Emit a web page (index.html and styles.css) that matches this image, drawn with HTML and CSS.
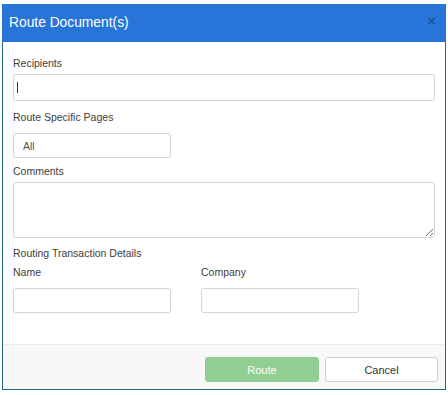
FILE: index.html
```html
<!DOCTYPE html>
<html>
<head>
    <title>Route Document(s)</title>
    <link rel="stylesheet" href="styles.css">
</head>
<body>
    <div class="dialog">
        <div class="dialog-header">
            <span class="dialog-title">Route Document(s)</span>
            <span class="close">&times;</span>
        </div>

        <div class="dialog-body">
            <label class="label">Recipients</label>
            <div class="input-wrap">
                <input type="text" class="input input-lg">
                <span class="caret"></span>
            </div>

            <label class="label label-sm">Route Specific Pages</label>
            <input type="text" class="input input-sm pages" value="All">

            <label class="label">Comments</label>
            <textarea class="input comments"></textarea>

            <div class="section-title">Routing Transaction Details</div>
            <div class="details">
                <div class="detail">
                    <label class="label label-sm">Name</label>
                    <input type="text" class="input input-sm">
                </div>
                <div class="detail">
                    <label class="label label-sm">Company</label>
                    <input type="text" class="input input-sm">
                </div>
            </div>
        </div>

        <div class="dialog-footer">
            <button class="btn btn-route">Route</button>
            <button class="btn btn-cancel">Cancel</button>
        </div>
    </div>
</body>
</html>
```

FILE: styles.css
```css
* {
    box-sizing: border-box;
}

body {
    margin: 0;
    background-color: #fff;
    font-family: "Liberation Sans", Arial, sans-serif;
    color: #444;
}

.dialog {
    width: 444px;
    margin: 4px 2px 0 2px;
    border: 1px solid #1d6a89;
    border-top: none;
    background-color: #fff;
}

.dialog-header {
    display: flex;
    align-items: center;
    justify-content: space-between;
    height: 38px;
    margin: 0 -1px;
    padding: 0 10px 0 7px;
    background-color: #2775d8;
}

.dialog-title {
    color: #fff;
    font-size: 13.8px;
    padding-bottom: 2px;
}

.close {
    color: rgba(0, 0, 0, 0.28);
    font-size: 15px;
    font-weight: bold;
    line-height: 1;
    padding-bottom: 6px;
}

.dialog-body {
    display: flex;
    flex-direction: column;
    align-items: flex-start;
    padding: 14px 10px 31px 10px;
}

.label,
.section-title {
    display: block;
    font-size: 10.5px;
    line-height: 14px;
    color: #3d3d3d;
    margin-bottom: 4px;
}

.label-sm {
    margin-bottom: 9px;
}

.section-title {
    margin-bottom: 5px;
}

.input {
    display: block;
    border: 1px solid #d4d4d4;
    border-radius: 3px;
    background-color: #fff;
    font-family: inherit;
    font-size: 10.5px;
    color: #555;
    padding: 0 9px;
    outline: none;
}

.input-wrap {
    position: relative;
    width: 100%;
    margin-bottom: 9px;
}

.input-lg {
    width: 100%;
    height: 27px;
}

.caret {
    position: absolute;
    left: 4px;
    top: 8px;
    width: 1px;
    height: 11px;
    background-color: #333;
}

.input-sm {
    width: 158px;
    height: 25px;
}

.pages {
    margin-bottom: 6px;
}

.comments {
    width: 100%;
    height: 56px;
    margin-bottom: 8px;
    resize: both;
}

.details {
    display: flex;
    gap: 30px;
}

.dialog-footer {
    display: flex;
    justify-content: flex-end;
    gap: 6px;
    padding: 12px 7px 7px 0;
    border-top: 1px solid #ebebeb;
    background-color: #f8f8f8;
}

.btn {
    height: 25px;
    font-family: inherit;
    font-size: 11px;
    border-radius: 3px;
    cursor: pointer;
}

.btn-route {
    width: 114px;
    background-color: #90cf91;
    color: #fff;
    border: 1px solid #8fcd8f;
}

.btn-cancel {
    width: 113px;
    background-color: #fff;
    color: #333;
    border: 1px solid #cfcfcf;
}
```
